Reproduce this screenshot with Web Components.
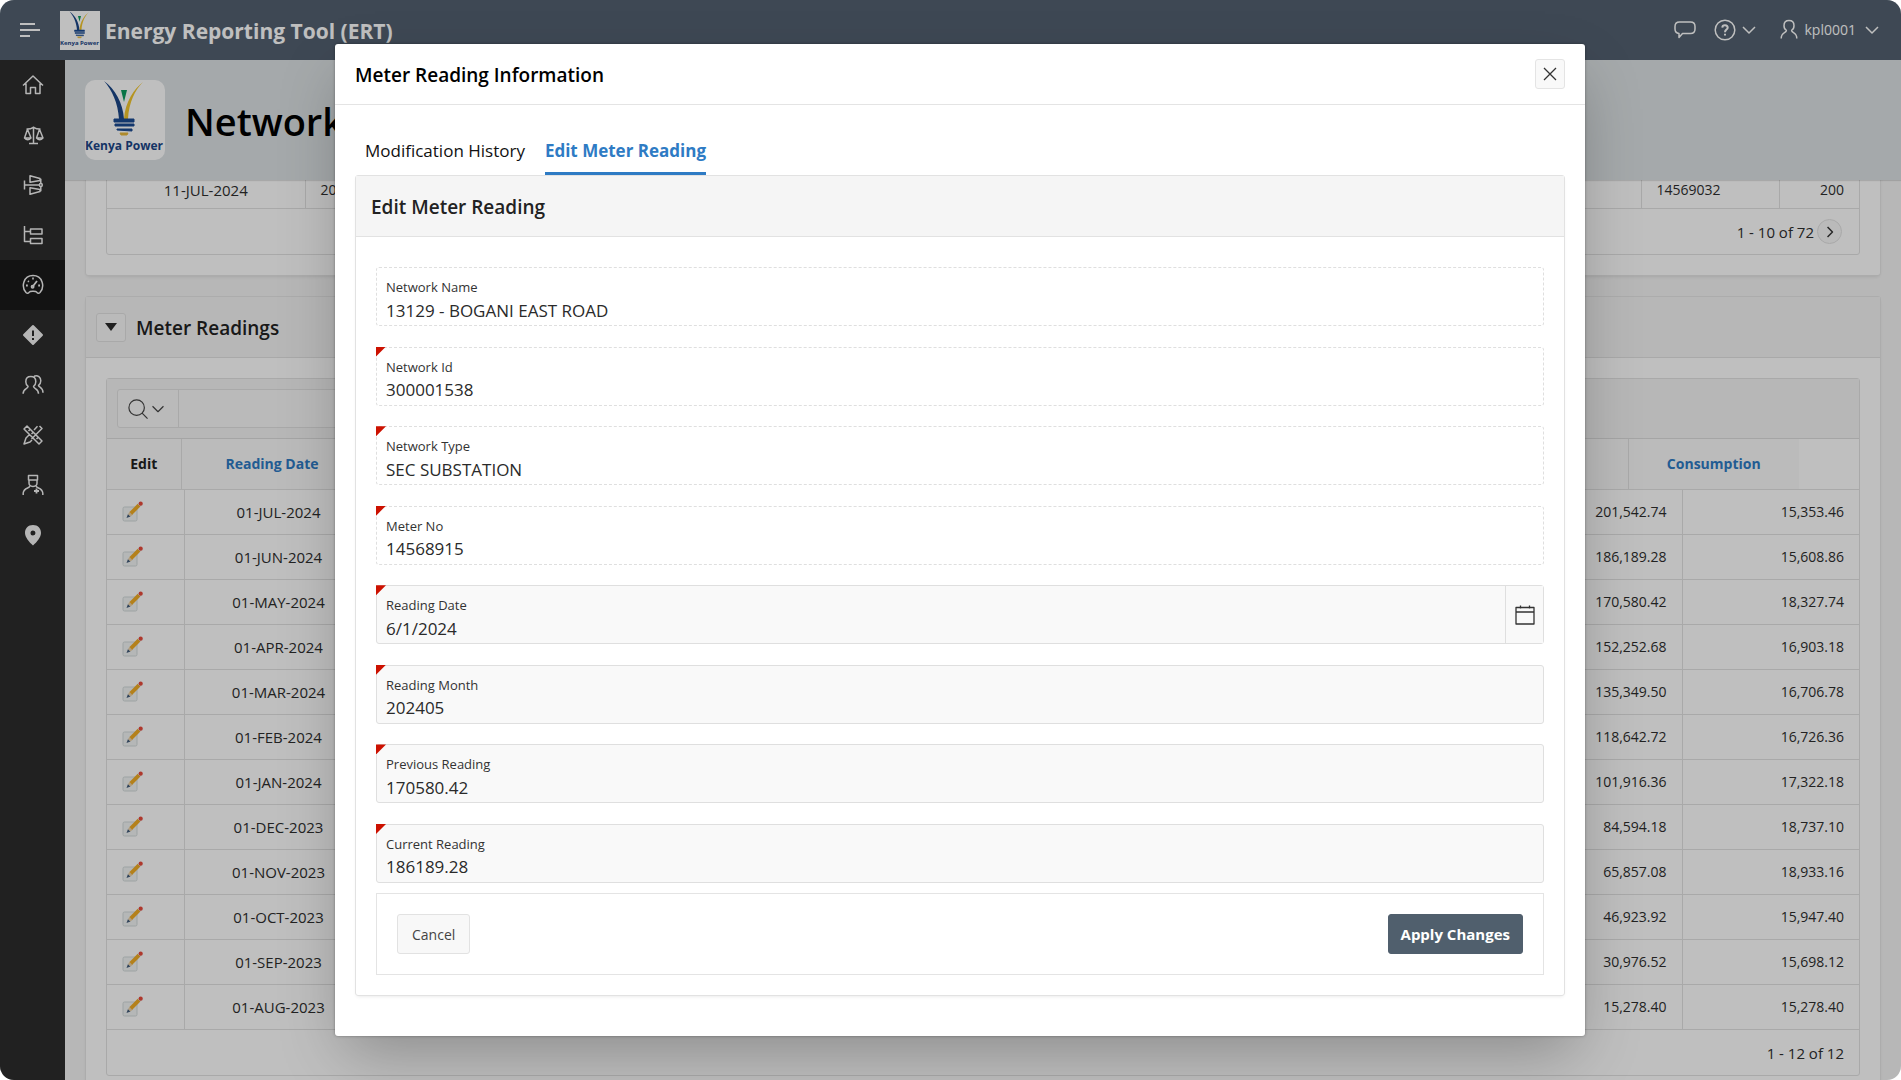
<!DOCTYPE html>
<html lang="en">
<head>
<meta charset="utf-8">
<title>Energy Reporting Tool (ERT)</title>
<style>
  html, body { margin: 0; height: 100%; background: #fff; }
  body { font-family: "Open Sans", "Noto Sans", sans-serif; font-size: 14px; color: #2e2e2e; overflow: hidden; }
</style>
</head>
<body>
<ert-app></ert-app>
<script>
const make = (name, html, setup) => {
  const tpl = document.createElement('template');
  tpl.innerHTML = html;
  customElements.define(name, class extends HTMLElement {
    constructor() {
      super();
      this.attachShadow({ mode: 'open' }).append(tpl.content.cloneNode(true));
    }
    connectedCallback() { if (setup && !this.ready) { this.ready = true; setup(this, this.shadowRoot); } }
  });
};

const ICONS = {
  home: '<path d="M1 11.500 11 2 21 11.500M4 9.500v10h4.500v-6h5v6H18v-10"/>',
  scale: '<path d="M11.500 2.500v17M7 19.500h9M4.500 5Q8 5.300 11.500 3.300 15 5.300 18.500 5M5.500 5.300 2.500 14h6.500zM17.500 5.300l-3 8.700h6.500zM2.500 14q3.200 3.500 6.500 0M14.500 14q3.200 3.500 6.500 0"/>',
  net: '<path d="M2.500 6.500v9M2.500 11H17M8 1.800v6.500L18 6.500V4.500zM8 20.200v-6.500l10 1.800v2zM18.800 4.800v4.700M18.800 12.500v4.700"/><circle cx="18.800" cy="11" r="1.500"/>',
  tree: '<path d="M2.500 2v15.500h6M2.500 7.500h6M8.500 5h11.500v5h-11.500zM8.500 14.500h11.500v5h-11.500z"/>',
  gauge: '<path d="M4 18.500C-1 13 1.200 1.500 11 1.500S23 13 18 18.500c-1.200 1.200-2.600 1-3.300-.3-.6-1-2-.9-3.700-.9s-3.100-.1-3.700.9c-.7 1.300-2.100 1.500-3.300.3z"/><path d="M10.500 12.800 15 7M4 11.500h1.800M16.200 11.500H18M6 7l.8.8M10.200 4.500h1.600" stroke-width="1.800"/><circle cx="10.600" cy="12.800" r="1.200"/>',
  alert: '<path fill="currentColor" stroke-linejoin="round" stroke-width="2" d="M11 2 20 11 11 20 2 11z"/><path d="M11 6.500v5.500M11 14v2" stroke="#2c2c2c" stroke-width="2"/>',
  users: '<path d="M8.800 2.500c3 0 5 2 5 5.200 0 2-.9 3.700-2.300 4.600 0 3 5 1.500 5 7.500M8.800 2.500c-3 0-5 2-5 5.200 0 2 .9 3.700 2.300 4.600 0 3-5 1.500-5 7.500M12 2.200c4-1.200 6.800 1 6.800 4.500 0 2.200-.9 3.700-2.300 4.600.3 2.400 4.500 1.500 4.500 7.500"/>',
  tools: '<path d="M2 5 5 2 20 17 17 20zM17.500 2l2.500 2.500L9.500 15M15.500 2.300 12 6M8 10l-4 4-2 6 6-2 2-2"/><path d="m8 5.500-1.500 1.500M11 8.500 9.500 10M16 13.500 14.500 15"/>',
  nurse: '<path d="M6.500 1.500h9V6h-9zM7 6v3c0 4.500 8 4.500 8 0V6M7.800 12c0 2.500-6 1.500-6.600 7v2M14.200 12c0 2.500 6 1.500 6.600 7v2"/><path d="M14.500 14.500v5M12 17h5" stroke-width="1.800"/>',
  pin: '<path fill="currentColor" stroke="none" fill-rule="evenodd" d="M11 1c5 0 8 3.500 8 8 0 4-4 9-8 12.500C7 18 3 13 3 9c0-4.500 3-8 8-8zm0 5.500a2.500 2.500 0 1 0 0 5 2.500 2.500 0 0 0 0-5z"/>',
  chat: '<path d="M5.500 3h11Q21 3 21 7.500v2.500q0 4.500-4.500 4.500H8.500L5 18.500v-4Q1 14 1 10V7.500Q1 3 5.500 3z"/>',
  help: '<circle cx="11" cy="11" r="9.800"/><path d="M8.300 8.600c.2-3.200 5.400-3 5.400.1 0 2-2.700 1.800-2.700 4.500M11 14.700v1.900" stroke-width="2"/>',
  user: '<path d="M11 1.500c3.200 0 5 2.200 5 5.200 0 2.200-1 3.800-2.400 4.600 0 3.200 5.200 1.500 5.200 8.200M11 1.500C7.800 1.500 6 3.700 6 6.700c0 2.200 1 3.800 2.400 4.600 0 3.200-5.200 1.500-5.200 8.200"/>',
  down: '<path d="m5 8 6 6 6-6"/>',
  right: '<path d="m8 5 6 6-6 6"/>',
  search: '<circle cx="9.500" cy="9.500" r="8.500"/><path d="m15.500 15.500 6 6"/>',
  cross: '<path d="m5 5 12 12M17 5 5 17"/>',
  calendar: '<path d="M2 3.500h18V20H2zM2 8h18M6.500 1.500v3M15.500 1.500v3"/>',
  menu: '<path d="M2 5h15M2 11h20M2 17h10" stroke-width="1.800"/>'
};

make('ert-icon', `
<style>
  :host { display: inline-flex; width: 22px; height: 22px; flex: none; }
  svg { width: 100%; height: 100%; fill: none; stroke: currentColor; stroke-width: var(--stroke, 1.500); stroke-linejoin: round; }
</style><svg viewBox="0 0 22 22" aria-hidden="true"></svg>`,
(el, root) => { root.querySelector('svg').innerHTML = ICONS[el.getAttribute('name')]; });

make('ert-pencil', `
<style>:host { display: block; width: 22px; height: 22px; } svg { display: block; }</style>
<svg width="22" height="22" viewBox="0 0 22 22" aria-hidden="true">
  <rect x="1" y="6" width="14" height="14" rx="1.500" fill="#f2f4f4" stroke="#d2dadb"/>
  <path d="M4.500 17 6 13 8.500 15.500z" fill="#415a78"/>
  <path d="M6 13 8 10.500l3 3-2.500 2z" fill="#ecd0a4"/>
  <path d="m7.500 11 8.200-8.200 2.700 2.700-8.200 8.200z" fill="#f0ac25"/>
  <path d="m15.700 2.800 1.300-1.300 2.700 2.700L18.400 5.500z" fill="#dfe3e6"/>
  <circle cx="18.700" cy="2.700" r="2.100" fill="#e84b3c"/>
</svg>`);

make('kenya-power-logo', `
<style>:host { display: block; background: #fff; overflow: hidden; flex: none; } svg { display: block; width: 100%; height: 100%; }</style>
<svg viewBox="0 0 80 80" preserveAspectRatio="none" role="img" aria-label="Kenya Power">
  <path d="M19 1C30 9 38 23 39 39h-5C33 23 27 10 19 1z" fill="#1b4687"/>
  <path d="M58 2C50 10 44 22 43 39h-4C40 22 49 9 58 2z" fill="#f2c62d"/>
  <path d="M36 10h6l-3 12z" fill="#0c9b5f"/>
  <path d="M29 39h20v3H29zM30 44h19v2H30zM32 49h15v2l-15-1z" fill="#1b4b92" stroke="#1b4b92" stroke-linejoin="round"/>
  <path d="M35 53h8l-1 2h-6z" fill="#e9b93a" stroke="#e9b93a" stroke-linejoin="round"/>
  <text x="39" y="70" text-anchor="middle" font-family="Open Sans, sans-serif" font-weight="700" font-size="12" fill="#1b4687">Kenya Power</text>
</svg>`);

make('ert-header', `
<style>
  :host { display: flex; height: 60px; box-sizing: border-box; align-items: center; justify-content: space-between; padding: 0 18px; background: #536170; color: #fff; }
  div { display: flex; align-items: center; }
  button { all: unset; display: flex; align-items: center; cursor: pointer; }
  .brand { gap: 5px; }
  .menu { margin-right: 15px; }
  kenya-power-logo { width: 40px; height: 39px; }
  h1 { margin: 0; padding-top: 2px; font-size: 21px; line-height: 30px; font-weight: 700; }
  .tools { gap: 18px; }
  .help { gap: 2px; }
  .user { gap: 5px; }
  .user span { font-size: 14px; line-height: 20px; }
</style>
<div class="brand">
  <button class="menu" aria-label="Main navigation"><ert-icon name="menu"></ert-icon></button>
  <kenya-power-logo></kenya-power-logo><h1>Energy Reporting Tool (ERT)</h1>
</div>
<div class="tools">
  <button aria-label="Feedback"><ert-icon name="chat"></ert-icon></button>
  <button class="help" aria-label="Help"><ert-icon name="help"></ert-icon><ert-icon name="down"></ert-icon></button>
  <button class="user"><ert-icon name="user"></ert-icon><span>kpl0001</span><ert-icon name="down"></ert-icon></button>
</div>`);

make('ert-nav', `
<style>
  :host { display: block; width: 65px; flex: none; background: #2c2c2c; color: #f2f2f2; }
  nav { display: flex; flex-direction: column; }
  a { display: flex; height: 50px; align-items: center; justify-content: center; color: inherit; }
  a.on { background: #1a1a1a; }
</style><nav aria-label="Main"></nav>`,
(el, root) => {
  const items = ['home', 'scale', 'net', 'tree', 'gauge', 'alert', 'users', 'tools', 'nurse', 'pin'];
  root.querySelector('nav').innerHTML = items.map(i => `<a href="#${i}" aria-label="${i}"${i === 'gauge' ? ' class="on"' : ''}><ert-icon name="${i}"></ert-icon></a>`).join('');
});

make('ert-titlebar', `
<style>
  :host { display: flex; height: 120px; flex: none; box-sizing: border-box; align-items: center; gap: 20px; padding: 0 20px; background: #dde2e5; position: relative; z-index: 1; box-shadow: 0 1px 1px rgba(0,0,0,.12); }
  kenya-power-logo { width: 80px; height: 80px; border-radius: 10px; }
  h2 { margin: 0; padding-top: 2px; color: #000; font-size: 38px; line-height: 54px; font-weight: 600; }
</style><kenya-power-logo></kenya-power-logo><h2><slot></slot></h2>`);

make('ert-region', `
<style>
  :host { display: block; background: #fff; border: 1px solid #e6e6e6; border-radius: 3px; box-shadow: 0 2px 4px -2px rgba(0,0,0,.15); }
  header { display: flex; height: 60px; align-items: center; gap: 10px; padding: 0 10px; background: #f5f5f5; border-bottom: 1px solid #e2e2e2; }
  :host([plain]) header { display: none; }
  h3 { margin: 0; padding-top: 2px; font-size: 19px; line-height: 26px; font-weight: 600; color: #222; }
  button { width: 30px; height: 29px; padding: 0; background: #f8f8f8; border: 1px solid #e2e2e2; border-radius: 3px; display: flex; align-items: center; justify-content: center; }
  i { border: 6px solid transparent; border-top: 8px solid #2a2a2a; border-bottom: 0; }
  .body { padding: 20px; }
</style>
<header><h3></h3></header><div class="body"><slot></slot></div>`,
(el, root) => {
  root.querySelector('h3').textContent = el.getAttribute('heading') || '';
  if (el.hasAttribute('collapsible')) root.querySelector('header').insertAdjacentHTML('afterbegin', '<button aria-label="Collapse"><i></i></button>');
});

make('ert-results', `
<style>
  :host { display: block; border: 1px solid #e2e2e2; border-radius: 3px; }
  table { width: 100%; border-collapse: collapse; table-layout: fixed; }
  td { height: 36px; padding: 8px 15px 0; border-bottom: 1px solid #e2e2e2; border-right: 1px solid #e2e2e2; line-height: 16px; }
  td:last-child { border-right: 0; text-align: right; }
  td:first-child { text-align: center; font-size: 15px; }
  footer { display: flex; height: 45px; align-items: center; justify-content: flex-end; gap: 3px; padding-right: 17px; font-size: 15px; line-height: 20px; }
  button { width: 25px; height: 25px; padding: 0; border: 1px solid #e2e2e2; border-radius: 50%; background: #f8f8f8; display: flex; align-items: center; justify-content: center; color: #333; }
  ert-icon { width: 18px; height: 18px; --stroke: 1.800; }
</style>
<table>
  <colgroup><col style="width:198px"><col><col style="width:138px"><col style="width:80px"></colgroup>
  <tbody><tr><td>11-JUL-2024</td><td>20</td><td>14569032</td><td>200</td></tr></tbody>
</table>
<footer><span>1 - 10 of 72</span><button aria-label="Next"><ert-icon name="right"></ert-icon></button></footer>`);

const READINGS = [
  ['01-JUL-2024', '201,542.74', '15,353.46'], ['01-JUN-2024', '186,189.28', '15,608.86'],
  ['01-MAY-2024', '170,580.42', '18,327.74'], ['01-APR-2024', '152,252.68', '16,903.18'],
  ['01-MAR-2024', '135,349.50', '16,706.78'], ['01-FEB-2024', '118,642.72', '16,726.36'],
  ['01-JAN-2024', '101,916.36', '17,322.18'], ['01-DEC-2023', '84,594.18', '18,737.10'],
  ['01-NOV-2023', '65,857.08', '18,933.16'], ['01-OCT-2023', '46,923.92', '15,947.40'],
  ['01-SEP-2023', '30,976.52', '15,698.12'], ['01-AUG-2023', '15,278.40', '15,278.40']
];

make('ert-grid', `
<style>
  :host { display: block; border: 1px solid #e2e2e2; border-radius: 3px; }
  .toolbar { display: flex; height: 59px; align-items: center; padding: 0 10px; background: #f5f5f5; border-bottom: 1px solid #dcdcdc; }
  .search { display: flex; height: 37px; width: 420px; border: 1px solid #e2e2e2; border-radius: 3px; background: #f9f9f9; }
  .search button { display: flex; width: 61px; align-items: center; justify-content: center; padding: 0; border: 0; border-right: 1px solid #e2e2e2; background: none; color: #444; }
  .search input { flex: 1; min-width: 0; border: 0; background: none; }
  ert-icon { width: 20px; --stroke: 1.300; }
  table { width: 100%; border-collapse: collapse; table-layout: fixed; line-height: 20px; }
  th { height: 50px; padding: 0; border-bottom: 1px solid #e2e2e2; border-right: 1px solid #e2e2e2; background: #fafafa; color: #2e7bc4; font-weight: 700; font-size: 14px; }
  th:first-child { color: #222; }
  th:nth-last-child(2) { border-right: 0; }
  th:last-child { background: #fff; border-right: 0; }
  td { height: 44px; padding: 0 15px; border-bottom: 1px solid #e2e2e2; border-right: 1px solid #e2e2e2; text-align: right; }
  td:nth-child(2) { text-align: center; font-size: 15px; }
  td:last-child { border-right: 0; }
  footer { display: flex; height: 45px; align-items: center; justify-content: flex-end; padding-right: 15px; font-size: 15px; line-height: 20px; }
</style>
<div class="toolbar"><div class="search">
  <button aria-label="Search columns"><ert-icon name="search"></ert-icon><ert-icon name="down"></ert-icon></button>
  <input type="text" aria-label="Search">
</div></div>
<table>
  <colgroup><col style="width:74px"><col style="width:182px"><col><col style="width:171px"><col style="width:60px"></colgroup>
  <thead><tr><th>Edit</th><th>Reading Date</th><th></th><th>Consumption</th><th></th></tr></thead>
</table>
<table>
  <colgroup><col style="width:77px"><col style="width:189px"><col><col style="width:177px"></colgroup>
  <tbody></tbody>
</table>
<footer>1 - 12 of 12</footer>`,
(el, root) => {
  root.querySelector('tbody').innerHTML = READINGS.map(r => `<tr><td><ert-pencil></ert-pencil></td><td>${r[0]}</td><td>${r[1]}</td><td>${r[2]}</td></tr>`).join('');
});

make('ert-field', `
<style>
  :host { display: flex; height: 59px; box-sizing: border-box; position: relative; border: 1px solid #dfdfdf; border-radius: 3px; background: #f9f9f9; }
  :host([readonly]) { border-style: dashed; background: #fff; }
  .text { flex: 1; display: flex; flex-direction: column; padding: 9px 9px 0; }
  label { font-size: 13px; line-height: 20px; color: #333; }
  input { border: 0; padding: 0; margin: 0; height: 26px; background: none; outline: 0; font-family: inherit; font-size: 17px; color: #2a2a2a; }
  .mark { display: none; position: absolute; left: -1px; top: -1px; width: 10px; height: 10px; background: #c10; clip-path: polygon(0 0, 100% 0, 0 100%); }
  :host([required]) .mark { display: block; }
  button { display: flex; width: 38px; align-items: center; justify-content: center; padding: 0; border: 0; border-left: 1px solid #dfdfdf; background: #f9f9f9; color: #333; }
  ert-icon { width: 22px; height: 22px; --stroke: 1.300; }
</style>
<span class="mark"></span><div class="text"><label for="v"></label><input id="v" type="text"></div>`,
(el, root) => {
  root.querySelector('label').textContent = el.getAttribute('label');
  const input = root.querySelector('input');
  input.value = el.getAttribute('value');
  input.readOnly = el.hasAttribute('readonly');
  input.required = el.hasAttribute('required');
  if (el.hasAttribute('date')) root.append(Object.assign(document.createElement('template'), { innerHTML: '<button aria-label="Choose date"><ert-icon name="calendar"></ert-icon></button>' }).content);
});

make('ert-dialog', `
<style>
  :host { position: absolute; inset: 0; z-index: 5; display: flex; justify-content: center; background: rgba(0,0,0,.25); padding: 44px 20px; padding-left: 39px; box-sizing: border-box; }
  section { width: 1250px; box-sizing: border-box; display: flex; flex-direction: column; background: #fff; border-radius: 3px; box-shadow: 0 25px 60px -10px rgba(0,0,0,.28), 0 0 3px rgba(0,0,0,.35); }
  .head { display: flex; height: 60px; flex: none; align-items: center; justify-content: space-between; padding: 0 20px; border-bottom: 1px solid #e4e4e4; }
  h2 { margin: 0; padding-top: 2px; font-size: 19px; line-height: 28px; font-weight: 600; color: #000; }
  button { font-family: inherit; border-radius: 3px; }
  .close { width: 30px; height: 30px; padding: 0; display: flex; align-items: center; justify-content: center; border: 1px solid #e4e4e4; background: #f9f9f9; color: #333; }
  .close ert-icon { width: 22px; height: 22px; --stroke: 1.300; }
  .body { flex: 1; display: flex; flex-direction: column; padding: 20px 20px 40px; }
  .tabs { display: flex; gap: 20px; padding: 0 10px; }
  .tabs a { height: 47px; line-height: 52px; border-bottom: 3px solid transparent; font-size: 17px; color: #111; text-decoration: none; }
  .tabs a.on { color: #2e7bc4; border-color: #2e7bc4; font-weight: 700; }
  .panel { flex: 1; display: flex; flex-direction: column; border: 1px solid #e2e2e2; border-radius: 3px; box-shadow: 0 2px 4px -2px rgba(0,0,0,.12); }
  .panel h3 { margin: 0; padding: 2px 15px 0; line-height: 58px; background: #f5f5f5; border-bottom: 1px solid #e2e2e2; font-size: 19px; font-weight: 600; color: #222; }
  form { flex: 1; display: flex; flex-direction: column; gap: 10px; padding: 30px 20px 20px; }
  .fields { flex: 1; display: flex; flex-direction: column; justify-content: space-between; }
  .actions { display: flex; align-items: center; justify-content: space-between; padding: 20px; border: 1px solid #e4e4e4; }
  .actions button { height: 40px; padding: 0 14px; font-size: 14px; border: 1px solid #e2e2e2; background: #f8f8f8; color: #444; }
  .actions .hot { background: #505f6d; border-color: #505f6d; color: #fff; font-weight: 700; padding: 0 12px; font-size: 15px; }
</style>
<section role="dialog" aria-label="Meter Reading Information">
  <div class="head"><h2>Meter Reading Information</h2><button class="close" aria-label="Close"><ert-icon name="cross"></ert-icon></button></div>
  <div class="body">
    <nav class="tabs"><a href="#history">Modification History</a><a href="#edit" class="on">Edit Meter Reading</a></nav>
    <div class="panel">
      <h3>Edit Meter Reading</h3>
      <form>
        <div class="fields">
          <ert-field readonly label="Network Name" value="13129 - BOGANI EAST ROAD"></ert-field>
          <ert-field readonly required label="Network Id" value="300001538"></ert-field>
          <ert-field readonly required label="Network Type" value="SEC SUBSTATION"></ert-field>
          <ert-field readonly required label="Meter No" value="14568915"></ert-field>
          <ert-field required date label="Reading Date" value="6/1/2024"></ert-field>
          <ert-field required label="Reading Month" value="202405"></ert-field>
          <ert-field required label="Previous Reading" value="170580.42"></ert-field>
          <ert-field required label="Current Reading" value="186189.28"></ert-field>
        </div>
        <div class="actions"><button type="button">Cancel</button><button type="button" class="hot">Apply Changes</button></div>
      </form>
    </div>
  </div>
</section>`);

make('ert-app', `
<style>
  :host { display: flex; flex-direction: column; height: 100vh; position: relative; overflow: hidden; border-radius: 14px; }
  ert-header { flex: none; }
  .page { flex: 1; min-height: 0; display: flex; }
  .main { flex: 1; min-width: 0; display: flex; flex-direction: column; background: #f5f5f5; }
  .scroll { flex: 1; min-height: 0; overflow: hidden; padding: 0 20px; }
  .scroll ert-region:first-child { margin: -38px 0 20px; }
</style>
<ert-header></ert-header>
<div class="page">
  <ert-nav></ert-nav>
  <div class="main">
    <ert-titlebar>Network</ert-titlebar>
    <div class="scroll">
      <ert-region plain><ert-results></ert-results></ert-region>
      <ert-region collapsible heading="Meter Readings"><ert-grid></ert-grid></ert-region>
    </div>
  </div>
</div>
<ert-dialog></ert-dialog>`);
</script>
</body>
</html>
